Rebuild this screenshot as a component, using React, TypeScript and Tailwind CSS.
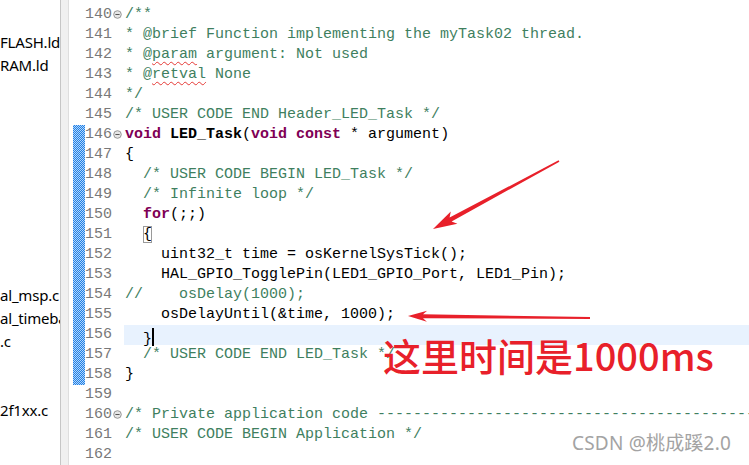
import type { ReactNode } from "react";

const mono = "font-['Liberation_Mono',monospace]";

const C = ({ children }: { children: ReactNode }) => (
  <span className="text-[#3f7f5f]">{children}</span>
);
const K = ({ children }: { children: ReactNode }) => (
  <span className="font-bold text-[#7f0055]">{children}</span>
);
const Wavy = ({ children }: { children: ReactNode }) => (
  <span className="underline decoration-wavy decoration-[#e53935] decoration-1 underline-offset-[3px]">
    {children}
  </span>
);

type Line = { n: number; code: ReactNode; fold?: boolean; bar?: boolean; current?: boolean };

const lines: Line[] = [
  { n: 139, code: <C>/* USER CODE BEGIN Header_LED_Task */</C> },
  { n: 140, code: <C>/**</C>, fold: true },
  { n: 141, code: <C>* @brief Function implementing the myTask02 thread.</C> },
  {
    n: 142,
    code: (
      <C>
        * @<Wavy>param</Wavy> argument: Not used
      </C>
    ),
  },
  {
    n: 143,
    code: (
      <C>
        * @<Wavy>retval</Wavy> None
      </C>
    ),
  },
  { n: 144, code: <C>*/</C> },
  { n: 145, code: <C>/* USER CODE END Header_LED_Task */</C> },
  {
    n: 146,
    fold: true,
    bar: true,
    code: (
      <>
        <K>void</K> <span className="font-bold">LED_Task</span>(<K>void</K> <K>const</K> * argument)
      </>
    ),
  },
  { n: 147, bar: true, code: "{" },
  { n: 148, bar: true, code: <>{"  "}<C>/* USER CODE BEGIN LED_Task */</C></> },
  { n: 149, bar: true, code: <>{"  "}<C>/* Infinite loop */</C></> },
  { n: 150, bar: true, code: <>{"  "}<K>for</K>(;;)</> },
  {
    n: 151,
    bar: true,
    code: (
      <>
        {"  "}
        <span className="outline outline-1 -outline-offset-1 outline-[#9a9a9a]">{"{"}</span>
      </>
    ),
  },
  { n: 152, bar: true, code: "    uint32_t time = osKernelSysTick();" },
  { n: 153, bar: true, code: "    HAL_GPIO_TogglePin(LED1_GPIO_Port, LED1_Pin);" },
  { n: 154, bar: true, code: <C>{"//    osDelay(1000);"}</C> },
  { n: 155, bar: true, code: "    osDelayUntil(&time, 1000);" },
  {
    n: 156,
    bar: true,
    current: true,
    code: (
      <>
        {"  }"}
        <span className="inline-block h-[18px] w-[2px] translate-y-[3px] bg-black" />
      </>
    ),
  },
  { n: 157, bar: true, code: <>{"  "}<C>/* USER CODE END LED_Task */</C></> },
  { n: 158, bar: true, code: "}" },
  { n: 159, code: "" },
  {
    n: 160,
    fold: true,
    code: <C>{"/* Private application code " + "-".repeat(60)}</C>,
  },
  { n: 161, code: <C>/* USER CODE BEGIN Application */</C> },
  { n: 162, code: "" },
];

const files: string[] = [
  "FLASH.ld",
  "RAM.ld",
  "",
  "",
  "",
  "",
  "",
  "",
  "",
  "",
  "",
  "al_msp.c",
  "al_timebase_tim.c",
  ".c",
  "",
  "",
  "2f1xx.c",
];

const FoldIcon = () => (
  <svg width="9" height="9" viewBox="0 0 9 9" className="-translate-y-[1px]">
    <circle cx="4.5" cy="4.5" r="3.8" fill="#e6e6e6" stroke="#8c8c8c" strokeWidth="0.9" />
    <line x1="2.4" y1="4.5" x2="6.6" y2="4.5" stroke="#555" strokeWidth="1" />
  </svg>
);

// tapered red arrow: tail -> tip
const arrowPoints = (
  tx: number,
  ty: number,
  hx: number,
  hy: number,
  headLen: number,
  headW: number,
  tailW: number,
  neckW: number
) => {
  const dx = hx - tx;
  const dy = hy - ty;
  const len = Math.hypot(dx, dy);
  const ux = dx / len;
  const uy = dy / len;
  const nx = -uy;
  const ny = ux;
  const neck = [hx - ux * headLen, hy - uy * headLen];
  const barb = [hx - ux * (headLen + 4), hy - uy * (headLen + 4)];
  const pts = [
    [tx + nx * tailW, ty + ny * tailW],
    [neck[0] + nx * neckW, neck[1] + ny * neckW],
    [barb[0] + nx * headW, barb[1] + ny * headW],
    [hx, hy],
    [barb[0] - nx * headW, barb[1] - ny * headW],
    [neck[0] - nx * neckW, neck[1] - ny * neckW],
    [tx - nx * tailW, ty - ny * tailW],
  ];
  return pts.map((p) => `${p[0].toFixed(1)},${p[1].toFixed(1)}`).join(" ");
};

export default function App() {
  return (
    <div className="relative flex h-[465px] w-[749px] overflow-hidden bg-white">
      {/* project explorer, scrolled */}
      <div className="w-[60px] shrink-0 overflow-hidden pt-[31px] font-['Noto_Sans',sans-serif] text-[15px] tracking-[-0.2px] text-black">
        {files.map((f, i) => (
          <div key={i} className="h-[23px] whitespace-nowrap leading-[23px]">
            {f}
          </div>
        ))}
      </div>
      <div className="w-px shrink-0 bg-[#c6c6c6]" />
      <div className="w-[7px] shrink-0 bg-[#f0f0f0]" />
      <div className="w-px shrink-0 bg-[#dedede]" />

      {/* editor */}
      <div className={`flex-1 overflow-hidden ${mono} text-[15px]`}>
        <div className="-mt-[15px]">
          {lines.map((l) => (
            <div key={l.n} className="flex h-[20px] leading-[20px]">
              <div className="w-[4px] shrink-0" />
              <div
                className={`w-[12px] shrink-0 ${
                  l.bar
                    ? "bg-[#4f9aea] bg-[image:repeating-conic-gradient(#1f80e6_0_25%,#b4d6fa_0_50%)] bg-size-[2px_2px]"
                    : ""
                }`}
              />
              <div className="w-[27px] shrink-0 text-[#787878]">{l.n}</div>
              <div className="flex w-[12px] shrink-0 items-center pl-px">{l.fold && <FoldIcon />}</div>
              <div
                className={`flex-1 whitespace-pre pl-px text-black ${l.current ? "bg-[#e8f2fe]" : ""}`}
              >
                {l.code}
              </div>
            </div>
          ))}
        </div>
      </div>

      {/* annotations */}
      <svg className="pointer-events-none absolute left-0 top-0" width="749" height="465">
        <polygon points={arrowPoints(559, 161, 433, 229, 20, 7, 0.8, 2.2)} fill="#e8202a" />
        <polygon points={arrowPoints(590, 318, 408, 316, 15, 5.5, 1, 2)} fill="#e8202a" />
      </svg>
      <div className="absolute left-[383px] top-[336px] whitespace-nowrap font-['Noto_Sans_CJK_SC',sans-serif] text-[38px] font-medium leading-none text-[#e8202a]">
        这里时间是1000ms
      </div>
      <div className="absolute left-[572px] top-[434px] whitespace-nowrap font-['Noto_Sans','Noto_Sans_CJK_SC',sans-serif] text-[19px] tracking-[0.2px] leading-none text-[#a3a3a3] [text-shadow:0_0_2px_#fff]">
        CSDN @桃成蹊2.0
      </div>
    </div>
  );
}
